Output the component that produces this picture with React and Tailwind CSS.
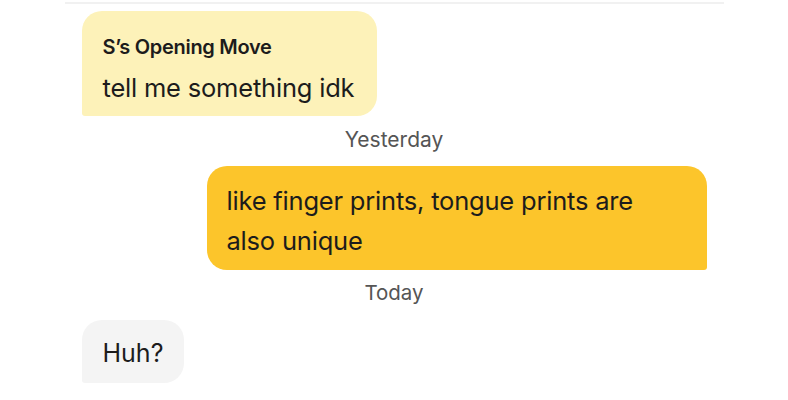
export default function App() {
  return (
    <div className="w-[788px] h-[400px] bg-white overflow-hidden" style={{ fontFamily: 'Inter, "Noto Sans", sans-serif' }}>
      <div className="mx-auto w-[659px] h-[2px] mt-[2px] bg-[#f1f1f1]" />
      <div className="mx-auto w-[625px] flex flex-col">
        <div className="self-start mt-[7px] w-[295px] h-[105px] bg-[#fdf2b9] rounded-[20px] rounded-bl-[3px] pl-[21px] pt-[23px] text-[#1c1c1c]">
          <div className="text-[20px] leading-[26px] font-semibold tracking-[-0.3px]">S’s Opening Move</div>
          <div className="mt-[10px] text-[25.5px] leading-[36px] tracking-[-0.2px]">tell me something idk</div>
        </div>
        <div className="mt-[13px] h-[22px] text-center text-[21px] leading-[22px] text-[#555]">Yesterday</div>
        <div className="self-end mt-[15px] w-[500px] h-[104px] bg-[#fcc52b] rounded-[20px] rounded-br-[3px] pl-[20px] pr-[40px] pt-[15px] text-[#1c1c1c] text-[25.5px] leading-[40px] tracking-[-0.2px]">
          like finger prints, tongue prints are also unique
        </div>
        <div className="mt-[12px] h-[22px] text-center text-[20.5px] leading-[22px] text-[#555]">Today</div>
        <div className="self-start mt-[16px] w-[102px] h-[63px] bg-[#f4f4f4] rounded-[20px] rounded-bl-[3px] pl-[21px] pt-[15px] text-[#1c1c1c] text-[25px] leading-[36px]">
          Huh?
        </div>
      </div>
    </div>
  );
}
